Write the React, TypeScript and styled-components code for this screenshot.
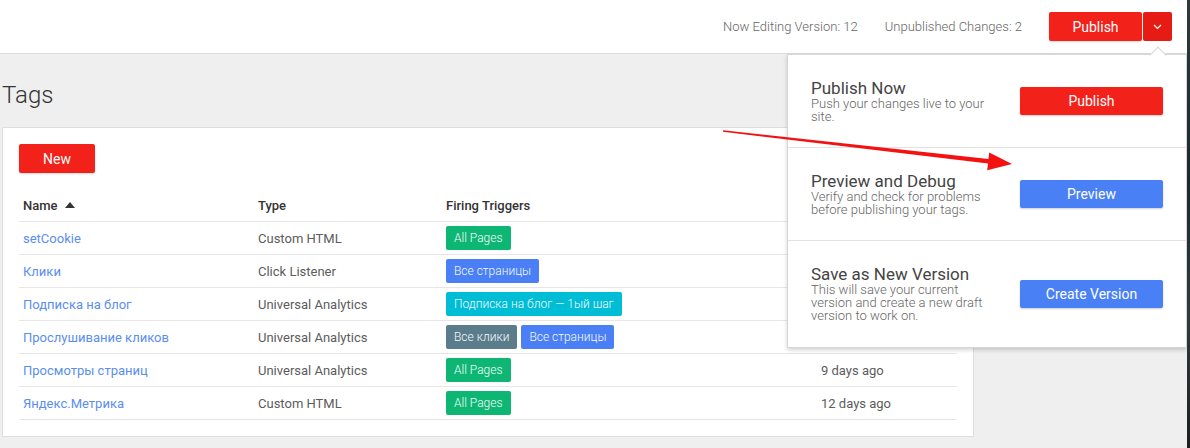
import styled, { createGlobalStyle } from 'styled-components';

interface TagRow {
    id: string;
    name: string;
    type: string;
    triggers: { label: string; kind: TriggerKind }[];
    edited?: string;
}

type TriggerKind = 'all' | 'pages' | 'custom' | 'clicks';

// у первых строк дата скрыта под меню публикации
const tags: TagRow[] = [
    {
        id: 't1',
        name: 'setCookie',
        type: 'Custom HTML',
        triggers: [{ label: 'All Pages', kind: 'all' }],
    },
    {
        id: 't2',
        name: 'Клики',
        type: 'Click Listener',
        triggers: [{ label: 'Все страницы', kind: 'pages' }],
    },
    {
        id: 't3',
        name: 'Подписка на блог',
        type: 'Universal Analytics',
        triggers: [{ label: 'Подписка на блог — 1ый шаг', kind: 'custom' }],
    },
    {
        id: 't4',
        name: 'Прослушивание кликов',
        type: 'Universal Analytics',
        triggers: [
            { label: 'Все клики', kind: 'clicks' },
            { label: 'Все страницы', kind: 'pages' },
        ],
    },
    {
        id: 't5',
        name: 'Просмотры страниц',
        type: 'Universal Analytics',
        triggers: [{ label: 'All Pages', kind: 'all' }],
        edited: '9 days ago',
    },
    {
        id: 't6',
        name: 'Яндекс.Метрика',
        type: 'Custom HTML',
        triggers: [{ label: 'All Pages', kind: 'all' }],
        edited: '12 days ago',
    },
];

const publishOptions = [
    {
        id: 'publish',
        title: 'Publish Now',
        text: 'Push your changes live to your site.',
        action: 'Publish',
        tone: 'red' as const,
    },
    {
        id: 'preview',
        title: 'Preview and Debug',
        text: 'Verify and check for problems before publishing your tags.',
        action: 'Preview',
        tone: 'blue' as const,
    },
    {
        id: 'version',
        title: 'Save as New Version',
        text: 'This will save your current version and create a new draft version to work on.',
        action: 'Create Version',
        tone: 'blue' as const,
    },
];

// ширины колонок таблицы (общие для шапки и строк)
const COLUMNS = '235px 188px 375px 1fr';

function App() {
    return (
        <>
            <GlobalStyle />
            <Window>
                <Page>
                    <TopBar>
                        <Status>Now Editing Version: 12</Status>
                        <Status>Unpublished Changes: 2</Status>
                        <PublishGroup>
                            <RedButton width={93}>Publish</RedButton>
                            <MenuToggle>
                                <svg width="9" height="6" viewBox="0 0 9 6">
                                    <path
                                        d="M1 1l3.5 3.5L8 1"
                                        fill="none"
                                        stroke="#fff"
                                        strokeWidth="1.2"
                                    />
                                </svg>
                            </MenuToggle>
                        </PublishGroup>
                    </TopBar>

                    <Content>
                        <PageTitle>Tags</PageTitle>
                        <Card>
                            <RedButton width={76}>New</RedButton>
                            <Table>
                                <Row>
                                    <HeadCell>
                                        Name
                                        <svg width="10" height="6" viewBox="0 0 10 6">
                                            <path d="M0 6L5 0l5 6z" fill="#333" />
                                        </svg>
                                    </HeadCell>
                                    <HeadCell>Type</HeadCell>
                                    <HeadCell>Firing Triggers</HeadCell>
                                    <HeadCell />
                                </Row>
                                {tags.map((tag) => (
                                    <Row key={tag.id}>
                                        <NameCell>{tag.name}</NameCell>
                                        <Cell>{tag.type}</Cell>
                                        <TriggerCell>
                                            {tag.triggers.map((t) => (
                                                <Trigger key={t.label} kind={t.kind}>
                                                    {t.label}
                                                </Trigger>
                                            ))}
                                        </TriggerCell>
                                        <Cell>{tag.edited}</Cell>
                                    </Row>
                                ))}
                            </Table>
                        </Card>
                    </Content>

                    <PublishMenu>
                        <Caret />
                        {publishOptions.map((opt) => (
                            <MenuSection key={opt.id} tall={opt.id === 'version'}>
                                <MenuText>
                                    <MenuTitle>{opt.title}</MenuTitle>
                                    <MenuDesc>{opt.text}</MenuDesc>
                                </MenuText>
                                <MenuButton tone={opt.tone}>{opt.action}</MenuButton>
                            </MenuSection>
                        ))}
                    </PublishMenu>

                    {/* красная стрелка-пометка поверх скриншота */}
                    <Annotation width="300" height="60" viewBox="0 0 300 60">
                        <polygon
                            points="3.1,10.2 268.5,39.1 269.2,32.4 292,44 267.2,50.2 268,43.5 2.9,11.8"
                            fill="#f41111"
                        />
                    </Annotation>
                </Page>
                <DesktopEdge />
            </Window>
        </>
    );
}

const GlobalStyle = createGlobalStyle`
    html, body {
        margin: 0;
        padding: 0;
    }
    body {
        width: 1190px;
        height: 448px;
        overflow: hidden;
        font-family: Roboto, 'Liberation Sans', sans-serif;
        background: #efefef;
    }
`;

const Window = styled.div`
    display: flex;
    width: 1190px;
    height: 448px;
`;

const Page = styled.div`
    position: relative;
    flex: 1;
    background: #efefef;
    overflow: hidden;
`;

const DesktopEdge = styled.div`
    width: 3px;
    background: linear-gradient(#2c3a3e, #1b2a30 40%, #2e3c40 70%, #1a1f22);
`;

const TopBar = styled.div`
    display: flex;
    align-items: center;
    justify-content: flex-end;
    gap: 27px;
    height: 53px;
    padding-right: 15px;
    background: #fff;
    border-bottom: 1px solid #dcdcdc;
`;

const Status = styled.span`
    font-size: 13px;
    font-weight: 300;
    color: #666;
`;

const PublishGroup = styled.div`
    display: flex;
    gap: 1px;
`;

const RedButton = styled.button<{ width: number }>`
    width: ${({ width }) => width}px;
    height: 29px;
    padding: 0;
    border: none;
    border-radius: 2px;
    background: #f2211a;
    color: #fff;
    font-family: inherit;
    font-size: 14px;
    box-shadow: 0 1px 2px rgba(0, 0, 0, 0.15);
`;

const MenuToggle = styled.button`
    display: flex;
    align-items: center;
    justify-content: center;
    width: 29px;
    height: 29px;
    padding: 0;
    border: none;
    border-radius: 2px;
    background: #e51b14;
`;

const Content = styled.div`
    padding: 0 2px;
`;

const PageTitle = styled.h1`
    margin: 0;
    padding: 27px 0 18px;
    font-size: 24px;
    line-height: 28px;
    font-weight: 300;
    color: #333;
`;

const Card = styled.div`
    width: 938px;
    padding: 16px;
    background: #fff;
    border: 1px solid #dedede;
`;

const Table = styled.div`
    margin-top: 16px;
`;

const Row = styled.div`
    display: grid;
    grid-template-columns: ${COLUMNS};
    align-items: center;
    height: 33px;
    box-sizing: border-box;
    border-bottom: 1px solid #e6e6e6;
`;

const HeadCell = styled.div`
    display: flex;
    align-items: center;
    gap: 7px;
    padding-left: 4px;
    font-size: 13px;
    font-weight: 500;
    color: #333;
`;

const Cell = styled.div`
    padding-left: 4px;
    font-size: 13px;
    color: #5c5c5c;
    white-space: nowrap;
`;

const NameCell = styled(Cell)`
    color: #5b8eef;
`;

const TriggerCell = styled.div`
    display: flex;
    gap: 4px;
    padding-left: 4px;
`;

const triggerColors: Record<TriggerKind, string> = {
    all: '#0db773',
    pages: '#4a7ff6',
    custom: '#00bdd6',
    clicks: '#5b7c8a',
};

const Trigger = styled.span<{ kind: TriggerKind }>`
    height: 24px;
    line-height: 24px;
    padding: 0 8px;
    border-radius: 2px;
    background: ${({ kind }) => triggerColors[kind]};
    color: #f4fbff;
    font-size: 12px;
    font-weight: 300;
    white-space: nowrap;
`;

const PublishMenu = styled.div`
    position: absolute;
    top: 54px;
    right: 0;
    width: 398px;
    background: #fff;
    border: 1px solid #d6d6d6;
    box-shadow: 0 2px 4px rgba(0, 0, 0, 0.18);
`;

const Caret = styled.div`
    position: absolute;
    top: -6px;
    right: 22px;
    width: 11px;
    height: 11px;
    background: #fff;
    border-top: 1px solid #d6d6d6;
    border-left: 1px solid #d6d6d6;
    transform: rotate(45deg);
`;

const MenuSection = styled.div<{ tall?: boolean }>`
    display: flex;
    align-items: center;
    justify-content: space-between;
    height: ${({ tall }) => (tall ? 106 : 92)}px;
    padding: 0 23px 0 23px;
    border-bottom: 1px solid #e2e2e2;

    &:last-child {
        border-bottom: none;
    }
`;

const MenuText = styled.div`
    width: 182px;
`;

const MenuTitle = styled.div`
    font-size: 17px;
    line-height: 17px;
    color: #444;
`;

const MenuDesc = styled.div`
    font-size: 13px;
    line-height: 13px;
    font-weight: 300;
    color: #666;
`;

const MenuButton = styled.button<{ tone: 'red' | 'blue' }>`
    width: 143px;
    height: 28px;
    padding: 0;
    border: none;
    border-radius: 2px;
    background: ${({ tone }) => (tone === 'red' ? '#f2221a' : '#4a80f5')};
    color: #fff;
    font-family: inherit;
    font-size: 14px;
    box-shadow: 0 1px 2px rgba(0, 0, 0, 0.2);
`;

const Annotation = styled.svg`
    position: absolute;
    left: 720px;
    top: 120px;
    pointer-events: none;
`;

export default App;
